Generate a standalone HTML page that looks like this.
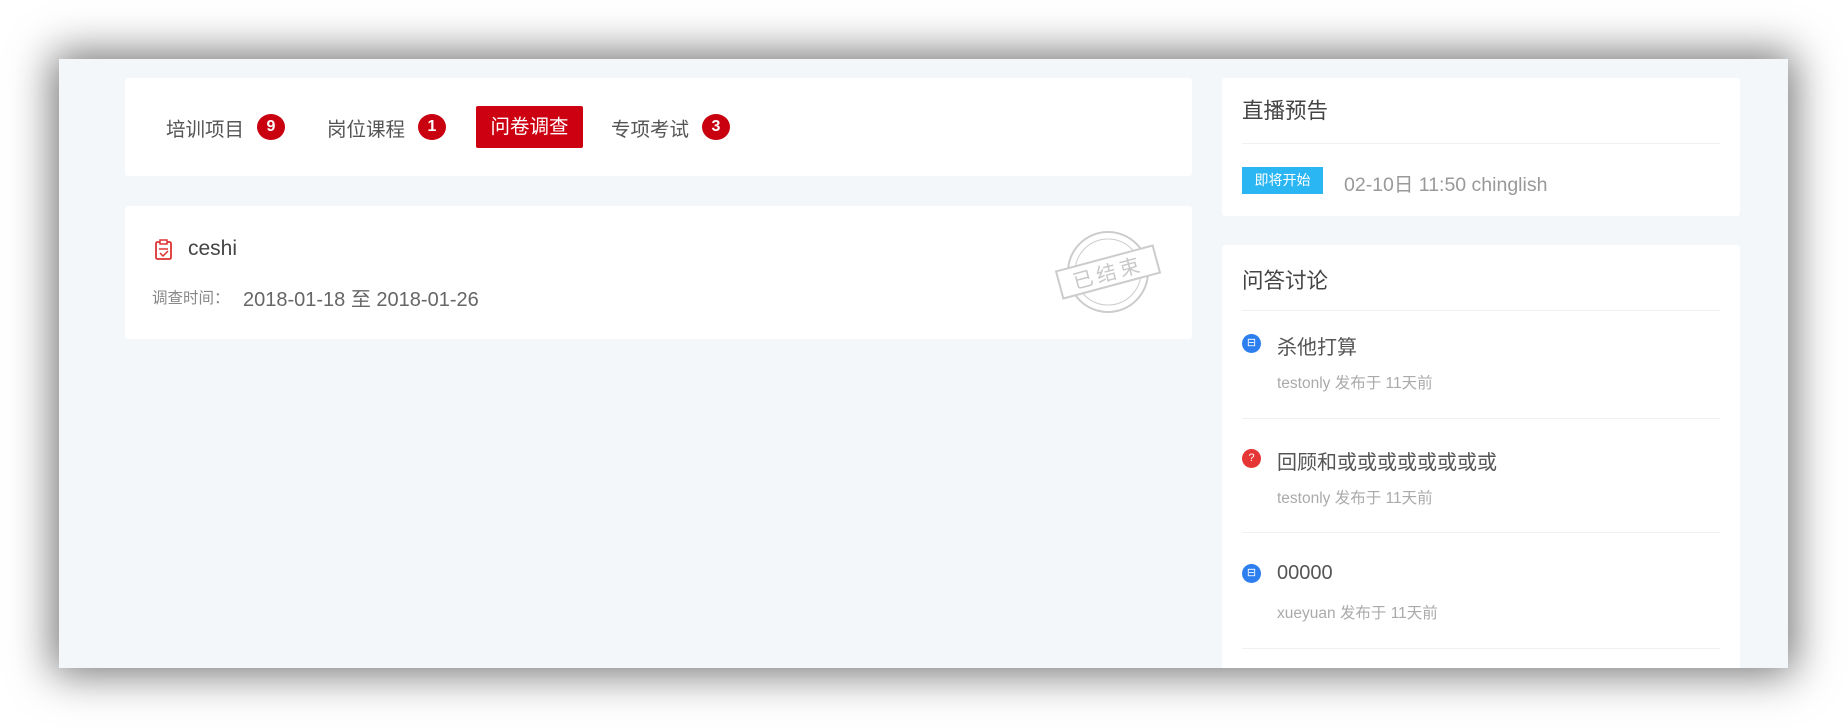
<!DOCTYPE html>
<html><head><meta charset="utf-8"><style>
*{margin:0;padding:0;box-sizing:border-box}
body{width:1847px;height:727px;background:#fff;position:relative;overflow:hidden;font-family:"Liberation Sans","Noto Sans CJK SC",sans-serif;color:#555}
.frame{position:absolute;left:59px;top:59px;width:1729px;height:609px;background:#f4f7fa;box-shadow:0 0 40px 6px rgba(0,0,0,.55);overflow:hidden}
.card{position:absolute;background:#fff;border-radius:3px}
.a{position:absolute;white-space:nowrap}
.badge{position:absolute;width:28px;height:26px;border-radius:50%;background:#c8000f;color:#fff;font-weight:bold;font-size:16px;text-align:center;line-height:26px}
.tab{font-size:19.5px;color:#555}
.hr{position:absolute;height:1px;background:#eef0f2}
.ic{position:absolute;width:19px;height:19px;border-radius:50%;color:#fff;font-size:11px;text-align:center;line-height:19px}
.t{font-size:20px;color:#555}
.s{font-size:15.5px;color:#aaa}
</style></head><body>
<div class="frame">
 <div class="card" style="left:66px;top:19px;width:1067px;height:98px"></div>
 <div class="card" style="left:66px;top:147px;width:1067px;height:133px"></div>
 <div class="card" style="left:1163px;top:19px;width:518px;height:138px"></div>
 <div class="card" style="left:1163px;top:186px;width:518px;height:440px"></div>
</div>
<div class="a tab" style="left:166px;top:113px">培训项目</div>
<div class="badge" style="left:257px;top:114px">9</div>
<div class="a tab" style="left:327px;top:113px">岗位课程</div>
<div class="badge" style="left:418px;top:114px">1</div>
<div class="a" style="left:476px;top:106px;width:107px;height:42px;background:#cc0011;border-radius:2px;color:#fff;font-size:19.5px;text-align:center;line-height:42px">问卷调查</div>
<div class="a tab" style="left:611px;top:113px">专项考试</div>
<div class="badge" style="left:702px;top:114px">3</div>

<svg class="a" style="left:154px;top:239px" width="20" height="22" viewBox="0 0 20 22"><rect x="2" y="3" width="15" height="17" rx="1.5" fill="none" stroke="#d33" stroke-width="1.8"/><rect x="6" y="1" width="7" height="4" fill="#fff" stroke="#d33" stroke-width="1.5"/><path d="M5 10h9M6 14l3 3 5-5" fill="none" stroke="#d33" stroke-width="1.5"/></svg>
<div class="a" style="left:188px;top:237px;font-size:21px;color:#444">ceshi</div>
<div class="a" style="left:152px;top:286px;font-size:15.5px;color:#888">调查时间：</div>
<div class="a" style="left:243px;top:283px;font-size:20px;color:#666">2018-01-18 至 2018-01-26</div>

<svg class="a" style="left:1053px;top:225px" width="110" height="94" viewBox="0 0 110 94"><g fill="none" stroke="#ccc" stroke-width="2"><circle cx="55" cy="47" r="40"/><circle cx="55" cy="47" r="33" stroke-width="1"/></g><g transform="rotate(-15 55 47)"><rect x="5" y="33" width="100" height="28" fill="#fff" stroke="#ccc" stroke-width="2"/><text x="55" y="55" text-anchor="middle" font-size="20" fill="#c8c8c8" font-family="Liberation Sans,Noto Sans CJK SC,sans-serif" letter-spacing="4">已结束</text></g></svg>

<div class="a" style="left:1242px;top:94px;font-size:21.5px;color:#444">直播预告</div>
<div class="hr" style="left:1242px;top:143px;width:478px"></div>
<div class="a" style="left:1242px;top:167px;width:81px;height:27px;background:#2ab6f2;color:#fff;font-size:14px;text-align:center;line-height:27px">即将开始</div>
<div class="a" style="left:1344px;top:168px;font-size:19.5px;color:#999">02-10日 11:50 chinglish</div>

<div class="a" style="left:1242px;top:264px;font-size:21.5px;color:#444">问答讨论</div>
<div class="hr" style="left:1242px;top:310px;width:478px"></div>
<div class="ic" style="left:1242px;top:334px;background:#2d7ff0">⊟</div>
<div class="a t" style="left:1277px;top:331px">杀他打算</div>
<div class="a s" style="left:1277px;top:371px">testonly 发布于 11天前</div>
<div class="hr" style="left:1242px;top:418px;width:478px"></div>
<div class="ic" style="left:1242px;top:449px;background:#e63535">?</div>
<div class="a t" style="left:1277px;top:446px">回顾和或或或或或或或或</div>
<div class="a s" style="left:1277px;top:486px">testonly 发布于 11天前</div>
<div class="hr" style="left:1242px;top:532px;width:478px"></div>
<div class="ic" style="left:1242px;top:564px;background:#2d7ff0">⊟</div>
<div class="a t" style="left:1277px;top:562px">00000</div>
<div class="a s" style="left:1277px;top:601px">xueyuan 发布于 11天前</div>
<div class="hr" style="left:1242px;top:648px;width:478px"></div>
</body></html>
